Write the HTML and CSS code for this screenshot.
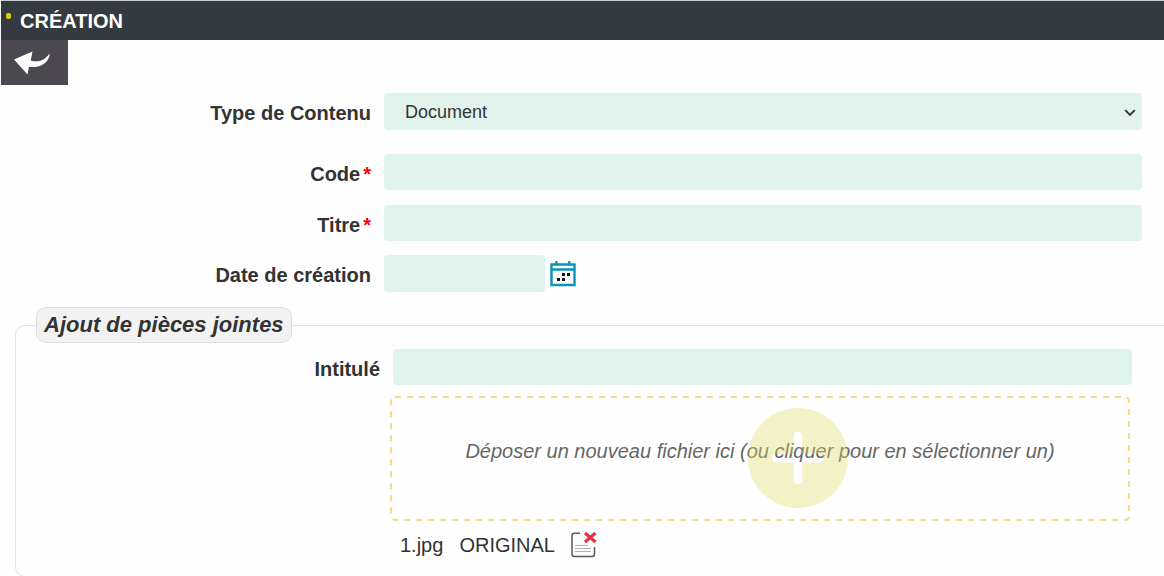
FILE: index.html
```html
<!DOCTYPE html>
<html lang="fr">
<head>
<meta charset="utf-8">
<title>Création</title>
<link rel="stylesheet" href="styles.css">
</head>
<body>
<header class="titlebar"><span class="dot"></span><h1 class="title">CRÉATION</h1></header>
<button class="back" type="button" aria-label="Retour">
  <svg width="38" height="26" viewBox="0 0 38 26" aria-hidden="true"><path d="M1 9.500L19.500 1.500L17.700 10.800C26 12.500 31.500 10.500 36.500 3.500C37 8 33 13 29 15C25 17 21 17.300 16 16.800L14.500 24.500Z" fill="#fff"/></svg>
</button>
<form class="form">
  <div class="row row-type">
    <label class="label" for="type">Type de Contenu</label>
    <div class="select-wrap">
      <select class="field select" id="type"><option>Document</option></select>
      <svg class="chevron" width="12" height="8" viewBox="0 0 12 8" aria-hidden="true"><path d="M1.200 1.200L6 6L10.800 1.200" fill="none" stroke="#333" stroke-width="1.900"/></svg>
    </div>
  </div>
  <div class="row">
    <label class="label" for="code">Code<span class="required">*</span></label>
    <input class="field" id="code" type="text">
  </div>
  <div class="row row-titre">
    <label class="label" for="titre">Titre<span class="required">*</span></label>
    <input class="field" id="titre" type="text">
  </div>
  <div class="row">
    <label class="label" for="date">Date de création</label>
    <div class="date-wrap">
      <input class="field date" id="date" type="text">
      <button class="icon-button" type="button" aria-label="Calendrier">
        <svg width="26" height="26" viewBox="0 0 26 26" aria-hidden="true"><g fill="none" stroke="#0894b8" stroke-width="2.400"><path d="M1.500 3.500H24.500V24H1.500ZM1.500 8.500H24.500M6.500 0V3M19.300 0V3"/></g><path d="M12 12h3v3h-3zM17 12h3v3h-3zM7 17h3v3h-3zM12 17h3v3h-3z" fill="#111"/></svg>
      </button>
    </div>
  </div>
  <fieldset class="attachments">
    <legend class="legend">Ajout de pièces jointes</legend>
    <div class="row row-inner">
      <label class="label" for="intitule">Intitulé</label>
      <input class="field" id="intitule" type="text">
    </div>
    <div class="files">
      <button class="dropzone" type="button">
        <svg class="outline" aria-hidden="true"><rect class="outline-rect" x="1" y="1" rx="4"/></svg>
        <span class="drop-text">Déposer un nouveau fichier ici (ou cliquer pour en sélectionner un)</span>
        <svg class="plus" width="100" height="100" viewBox="0 0 100 100" aria-hidden="true"><path fill="#dfdd5c" fill-opacity=".34" fill-rule="evenodd" d="M50 0A50 50 0 1 1 50 100A50 50 0 1 1 50 0ZM45.700 28V46H28.500A4.300 4.300 0 0 0 28.500 54.600H45.700V72A4.300 4.300 0 0 0 54.300 72V54.600H71.500A4.300 4.300 0 0 0 71.500 46H54.300V28A4.300 4.300 0 0 0 45.700 28Z"/></svg>
      </button>
      <div class="file">
        <span>1.jpg</span><span>ORIGINAL</span>
        <button class="icon-button" type="button" aria-label="Supprimer">
          <svg width="26" height="26" viewBox="0 0 26 26" aria-hidden="true"><path d="M9 1.200H3.500Q1 1.200 1 3.700V22Q1 24.500 3.500 24.500H21Q23.500 24.500 23.500 22V15" fill="none" stroke="#55585c" stroke-width="1.500"/><path d="M4 13.500H17M4 16.500H20M4 19.500H20" stroke="#b0b0b0" stroke-width="1"/><path d="M14 1L24.500 10M24.500 1L14 10" stroke="#dc3545" stroke-width="3.200"/></svg>
        </button>
      </div>
    </div>
  </fieldset>
</form>
</body>
</html>
```
FILE: styles.css
```css
* { box-sizing: border-box; }
html { overflow: hidden; background: #fefefe; }
body {
  margin: 0;
  border-top: 1px solid #c9cdce;
  border-left: 1px solid #fbfbfb;
  color: #333;
  font: 20px/24px "Liberation Sans", Arial, sans-serif;
}
.titlebar {
  position: relative;
  height: 39px;
  padding-left: 19px;
  display: flex;
  align-items: center;
  background: #343a40;
  color: #fff;
}
.dot {
  position: absolute;
  top: 12px;
  left: 5px;
  width: 5px;
  height: 6px;
  border-radius: 2px;
  background: #dccb00;
}
.title { margin: 0; font-size: 20px; line-height: 24px; }
.back {
  display: flex;
  width: 67px;
  height: 45px;
  padding: 10px 12px;
  border: 0;
  background: #4c484f;
}
.form { padding-top: 8px; }
.row {
  display: grid;
  grid-template-columns: 370px 1fr;
  column-gap: 13px;
  align-items: center;
  margin: 0 22px 15px 0;
}
.row-type { margin-bottom: 24px; }
.row-titre { margin-bottom: 14px; }
.label { padding-top: 3px; font-weight: bold; text-align: right; }
.required { margin-left: 3px; color: #f00; }
.field {
  display: block;
  width: 100%;
  height: 36px;
  padding: 0 21px;
  border: 0;
  border-radius: 4px;
  background: #e0f3ec;
  color: #333;
  font: 18px/24px "Liberation Sans", Arial, sans-serif;
}
.select-wrap { position: relative; }
.select { height: 37px; appearance: none; }
.chevron { position: absolute; right: 6px; top: 16px; pointer-events: none; }
.date-wrap { display: flex; align-items: center; gap: 5px; }
.date { width: 161px; height: 37px; }
.icon-button { display: flex; padding: 0; border: 0; background: none; }
.attachments {
  min-width: 0;
  margin: 0 -16px 0 14px;
  padding: 6px 47px 18px 20px;
  border: 1px solid #e4e2e4;
  border-radius: 10px;
}
.legend {
  padding: 4px 7px;
  border: 1px solid #e2dfe2;
  border-radius: 10px;
  background: #f2f2f2;
  font-size: 22px;
  line-height: 26px;
  font-weight: bold;
  font-style: italic;
}
.row-inner { grid-template-columns: 344px 1fr; margin: 0 0 11px; }
.files { margin: 0 2px 0 354px; }
.dropzone {
  position: relative;
  display: flex;
  align-items: center;
  justify-content: center;
  width: 100%;
  height: 125px;
  padding: 0 0 16px;
  border: 0;
  background: none;
  color: #666;
  font: italic 20px/24px "Liberation Sans", Arial, sans-serif;
}
.outline { position: absolute; inset: 0; width: 100%; height: 100%; }
.outline-rect {
  width: calc(100% - 2px);
  height: calc(100% - 2px);
  fill: none;
  stroke: #ecdf83;
  stroke-width: 2px;
  stroke-dasharray: 6 6;
}
.plus { position: absolute; top: 12px; right: 282px; }
.file { display: flex; align-items: center; gap: 16px; padding: 11px 10px 0; }
```
